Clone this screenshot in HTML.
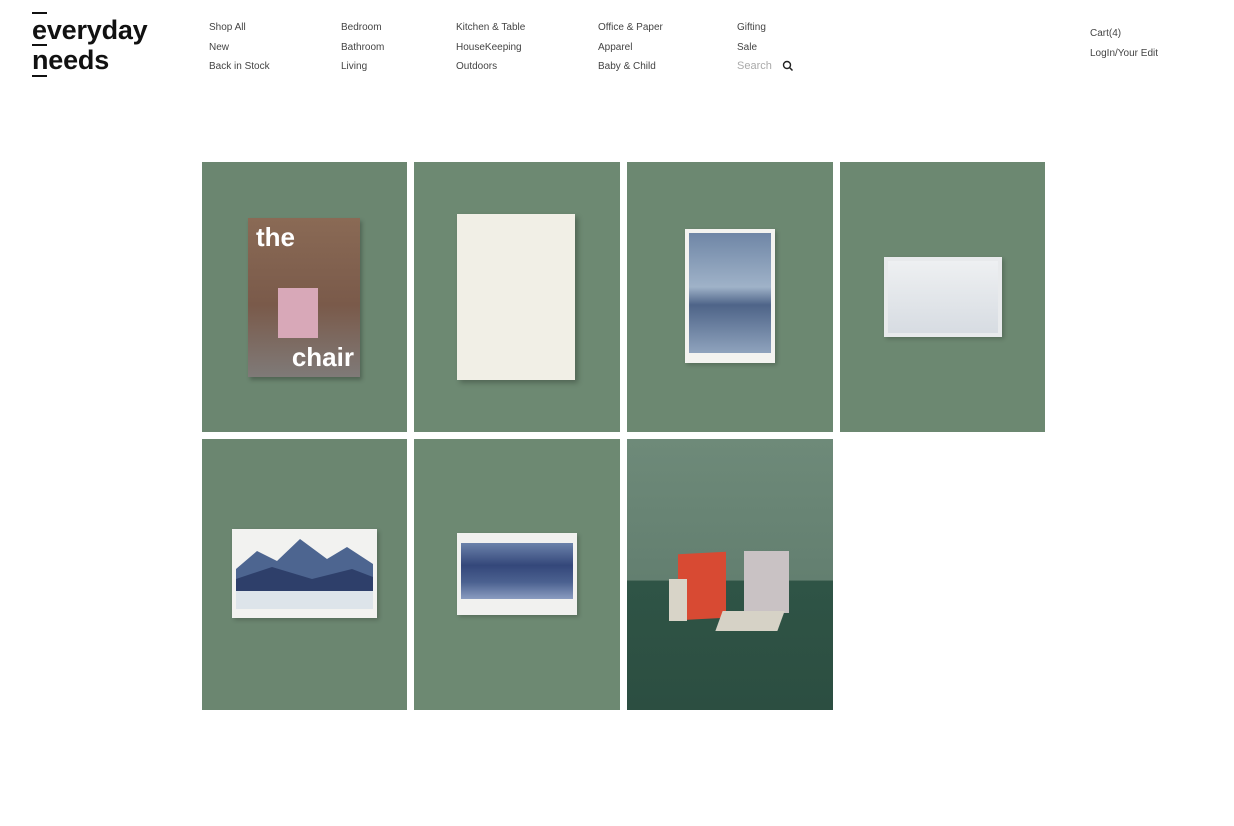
<!DOCTYPE html>
<html><head><meta charset="utf-8"><style>
*{margin:0;padding:0;box-sizing:border-box}
body{width:1234px;height:826px;background:#fff;font-family:"Liberation Sans",sans-serif;position:relative;overflow:hidden}
.logo{position:absolute;left:32px;top:15px;font-size:27px;font-weight:bold;color:#111;line-height:30px;letter-spacing:-0.2px}
.bar{position:absolute;left:32px;width:15px;height:2px;background:#111}
.nav{position:absolute;font-size:10px;color:#444;line-height:19.5px;top:18px}
.t{position:absolute;background:#6c8871}
</style></head><body>
<div class="bar" style="top:12px"></div>
<div class="bar" style="top:44px"></div>
<div class="bar" style="top:75px"></div>
<div class="logo">everyday<br>needs</div>
<div class="nav" style="left:209px">Shop All<br>New<br>Back in Stock</div>
<div class="nav" style="left:341px">Bedroom<br>Bathroom<br>Living</div>
<div class="nav" style="left:456px">Kitchen &amp; Table<br>HouseKeeping<br>Outdoors</div>
<div class="nav" style="left:598px">Office &amp; Paper<br>Apparel<br>Baby &amp; Child</div>
<div class="nav" style="left:737px;top:18px">Gifting<br>Sale<br><span style="color:#aaa;font-size:11px">Search</span></div>
<svg style="position:absolute;left:782px;top:60px" width="12" height="12" viewBox="0 0 12 12"><circle cx="5" cy="5" r="3.5" fill="none" stroke="#222" stroke-width="1.4"/><line x1="7.5" y1="7.5" x2="10.5" y2="10.5" stroke="#222" stroke-width="1.5"/></svg>
<div class="nav" style="left:1090px;top:24px">Cart(4)<br>LogIn/Your Edit</div>

<div class="t" style="left:202px;top:162px;width:205px;height:270px;background:#6b8670">
 <div style="position:absolute;left:46px;top:56px;width:112px;height:159px;background:linear-gradient(#8a6a55,#7a5a4a 55%,#7f7a78);box-shadow:2px 3px 4px rgba(0,0,0,.25)">
  <div style="position:absolute;left:8px;top:4px;color:#fff;font-size:26px;font-weight:bold">the</div>
  <div style="position:absolute;left:30px;top:70px;width:40px;height:50px;background:#d8a8b8"></div>
  <div style="position:absolute;right:6px;bottom:4px;color:#fff;font-size:26px;font-weight:bold">chair</div>
 </div></div>
<div class="t" style="left:414px;top:162px;width:206px;height:270px;background:#6d8972">
 <div style="position:absolute;left:43px;top:52px;width:118px;height:166px;background:#f1efe6;box-shadow:3px 3px 5px rgba(0,0,0,.25)"></div></div>
<div class="t" style="left:627px;top:162px;width:206px;height:270px;background:#6c8871">
 <div style="position:absolute;left:58px;top:67px;width:90px;height:134px;background:#f3f3f0;box-shadow:2px 2px 4px rgba(0,0,0,.2)">
  <div style="position:absolute;left:4px;top:4px;right:4px;bottom:10px;background:linear-gradient(#6f86a6,#9fb2c8 45%,#4e6488 60%,#8fa3bd)"></div></div></div>
<div class="t" style="left:840px;top:162px;width:205px;height:270px;background:#6c8871">
 <div style="position:absolute;left:44px;top:95px;width:118px;height:80px;background:#e8eaec;box-shadow:2px 2px 4px rgba(0,0,0,.2)">
  <div style="position:absolute;left:4px;top:4px;right:4px;bottom:4px;background:linear-gradient(#eef0f2,#d7dce2)"></div></div></div>

<div class="t" style="left:202px;top:439px;width:205px;height:271px;background:#6b8670">
 <div style="position:absolute;left:30px;top:90px;width:145px;height:89px;background:#f2f2f0;box-shadow:2px 2px 4px rgba(0,0,0,.2)">
  <svg width="145" height="89" style="position:absolute;left:0;top:0"><polygon points="4,40 25,22 45,32 68,10 95,30 115,18 141,35 141,62 4,62" fill="#4d6590"/><polygon points="4,50 40,38 80,50 120,40 141,48 141,62 4,62" fill="#2e3f6a"/><rect x="4" y="62" width="137" height="18" fill="#dde4ea"/></svg></div></div>
<div class="t" style="left:414px;top:439px;width:206px;height:271px;background:#6d8972">
 <div style="position:absolute;left:43px;top:94px;width:120px;height:82px;background:#f1f1ef;box-shadow:2px 2px 4px rgba(0,0,0,.2)">
  <div style="position:absolute;left:4px;top:10px;right:4px;height:56px;background:linear-gradient(#6b82aa,#34477a 40%,#4b6190 70%,#8a9cc0)"></div></div></div>
<div class="t" style="left:627px;top:439px;width:206px;height:271px;background:linear-gradient(#6e8a79 0,#637f70 52%,#2f5446 52.5%,#2c4e41 100%)">
 <div style="position:absolute;left:51px;top:114px;width:48px;height:66px;background:#d84a33;transform:skewY(-3deg)"></div>
 <div style="position:absolute;left:42px;top:140px;width:18px;height:42px;background:#d8d4c8"></div>
 <div style="position:absolute;left:117px;top:112px;width:45px;height:62px;background:#c9c2c4"></div>
 <div style="position:absolute;left:92px;top:172px;width:62px;height:20px;background:#d6d2c6;transform:skewX(-20deg)"></div>
</div>
</body></html>
